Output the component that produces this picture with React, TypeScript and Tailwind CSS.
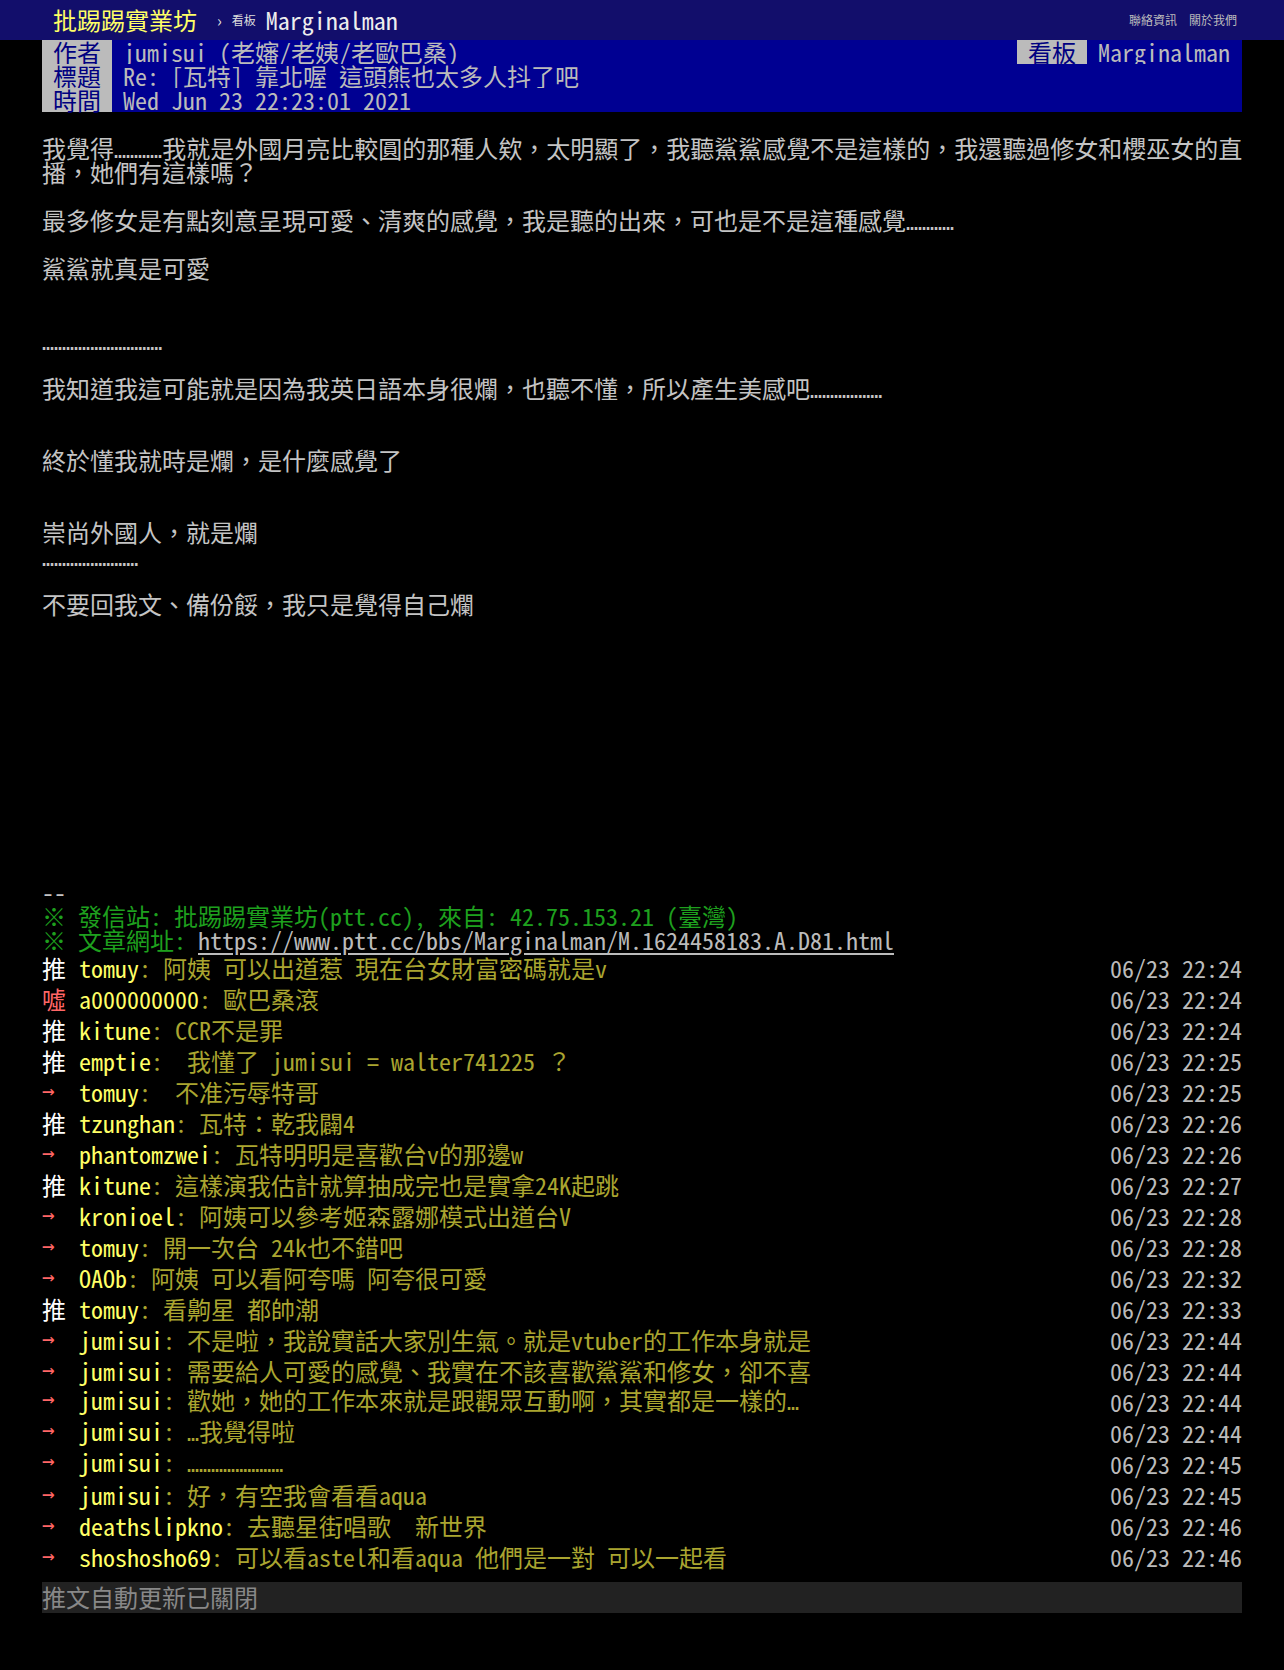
import type { ReactNode } from "react";

type Push = { tag: string; user: string; text: string; time: string };

const pushes: Push[] = [
  { tag: "推", user: "tomuy", text: ": 阿姨 可以出道惹 現在台女財富密碼就是v", time: "06/23 22:24" },
  { tag: "噓", user: "a000000000", text: ": 歐巴桑滾", time: "06/23 22:24" },
  { tag: "推", user: "kitune", text: ": CCR不是罪", time: "06/23 22:24" },
  { tag: "推", user: "emptie", text: ":  我懂了 jumisui = walter741225 ？", time: "06/23 22:25" },
  { tag: "→", user: "tomuy", text: ":  不准污辱特哥", time: "06/23 22:25" },
  { tag: "推", user: "tzunghan", text: ": 瓦特：乾我闢4", time: "06/23 22:26" },
  { tag: "→", user: "phantomzwei", text: ": 瓦特明明是喜歡台v的那邊w", time: "06/23 22:26" },
  { tag: "推", user: "kitune", text: ": 這樣演我估計就算抽成完也是實拿24K起跳", time: "06/23 22:27" },
  { tag: "→", user: "kronioel", text: ": 阿姨可以參考姬森露娜模式出道台V", time: "06/23 22:28" },
  { tag: "→", user: "tomuy", text: ": 開一次台 24k也不錯吧", time: "06/23 22:28" },
  { tag: "→", user: "OAOb", text: ": 阿姨 可以看阿夸嗎 阿夸很可愛", time: "06/23 22:32" },
  { tag: "推", user: "tomuy", text: ": 看齁星 都帥潮", time: "06/23 22:33" },
  { tag: "→", user: "jumisui", text: ": 不是啦，我說實話大家別生氣。就是vtuber的工作本身就是", time: "06/23 22:44" },
  { tag: "→", user: "jumisui", text: ": 需要給人可愛的感覺、我實在不該喜歡鯊鯊和修女，卻不喜", time: "06/23 22:44" },
  { tag: "→", user: "jumisui", text: ": 歡她，她的工作本來就是跟觀眾互動啊，其實都是一樣的…", time: "06/23 22:44" },
  { tag: "→", user: "jumisui", text: ": …我覺得啦", time: "06/23 22:44" },
  { tag: "→", user: "jumisui", text: ": ……………………", time: "06/23 22:45" },
  { tag: "→", user: "jumisui", text: ": 好，有空我會看看aqua", time: "06/23 22:45" },
  { tag: "→", user: "deathslipkno", text: ": 去聽星街唱歌  新世界", time: "06/23 22:46" },
  { tag: "→", user: "shoshosho69", text: ": 可以看astel和看aqua 他們是一對 可以一起看", time: "06/23 22:46" },
];

const body: string[] = [
  "",
  "我覺得…………我就是外國月亮比較圓的那種人欸，太明顯了，我聽鯊鯊感覺不是這樣的，我還聽過修女和櫻巫女的直",
  "播，她們有這樣嗎？",
  "",
  "最多修女是有點刻意呈現可愛、清爽的感覺，我是聽的出來，可也是不是這種感覺…………",
  "",
  "鯊鯊就真是可愛",
  "",
  "",
  "…………………………",
  "",
  "我知道我這可能就是因為我英日語本身很爛，也聽不懂，所以產生美感吧………………",
  "",
  "",
  "終於懂我就時是爛，是什麼感覺了",
  "",
  "",
  "崇尚外國人，就是爛",
  "……………………",
  "",
  "不要回我文、備份餒，我只是覺得自己爛",
  "",
  "",
  "",
  "",
  "",
  "",
  "",
  "",
  "",
  "",
  "",
  "--",
];

// "…" is half width in the original terminal font
function Dots({ text }: { text: string }) {
  const parts = text.split(/(…+)/);
  return (
    <>
      {parts.map((p, i) =>
        p.startsWith("…") ? (
          <span key={i} className="font-['DejaVu_Sans_Mono',monospace] text-[20px]">
            {p}
          </span>
        ) : (
          <span key={i}>{p}</span>
        )
      )}
    </>
  );
}

function Meta({ tag, children, right }: { tag: string; children: ReactNode; right?: ReactNode }) {
  return (
    <div className="flex h-[24px] leading-[24px]">
      <div className="w-[70px] bg-[#bbbbbb] text-center text-[#000080]">{tag}</div>
      <div className="flex flex-1 items-start justify-between bg-[#000092] pl-[11px] pr-[12px] text-[#bbbbbb]">
        <span className="whitespace-pre">{children}</span>
        {right}
      </div>
    </div>
  );
}

export default function App() {
  return (
    <div className="min-h-[1670px] bg-black font-['Noto_Sans_Mono_CJK_TC','Noto_Sans_CJK_TC',monospace] text-[24px] text-[#c4c4c4]">
      <div className="flex h-[40px] items-center justify-between bg-[#120e6b] pl-[53px] pr-[47px]">
        <div className="flex items-center">
          <span className="text-[24px] leading-none text-[#ffff66]">批踢踢實業坊</span>
          <span className="ml-[20px] text-[16px] text-[#dddddd]">›</span>
          <span className="ml-[10px] text-[12px] text-[#dddddd]">看板</span>
          <span className="ml-[10px] leading-none text-[#eeeeee]">Marginalman</span>
        </div>
        <div className="flex gap-[12px] text-[12px] text-[#bbbbbb]">
          <span>聯絡資訊</span>
          <span>關於我們</span>
        </div>
      </div>

      <div className="ml-[42px] w-[1200px]">
        <Meta
          tag="作者"
          right={
            <div className="flex">
              <span className="w-[70px] bg-[#bbbbbb] text-center text-[#000080]">看板</span>
              <span className="ml-[11px]">Marginalman</span>
            </div>
          }
        >
          jumisui (老嬸/老姨/老歐巴桑)
        </Meta>
        <Meta tag="標題">Re: [瓦特] 靠北喔 這頭熊也太多人抖了吧</Meta>
        <Meta tag="時間">Wed Jun 23 22:23:01 2021</Meta>

        {body.map((line, i) => (
          <div key={i} className="h-[24px] whitespace-pre leading-[23px]">
            <Dots text={line} />
          </div>
        ))}
        <div className="h-[24px] whitespace-pre leading-[23px] text-[#1ea01e]">
          ※ 發信站: 批踢踢實業坊(ptt.cc), 來自: 42.75.153.21 (臺灣)
        </div>
        <div className="h-[24px] whitespace-pre leading-[23px] text-[#1ea01e]">
          ※ 文章網址: <span className="text-[#bbbbbb] underline underline-offset-[3px]">https://www.ptt.cc/bbs/Marginalman/M.1624458183.A.D81.html</span>
        </div>

        {pushes.map((p, i) => (
          <div key={i} className="flex h-[31px] items-center justify-between whitespace-pre leading-[29px]">
            <div className="flex">
              {p.tag === "→" ? (
                <span className="inline-block w-[37px] font-['DejaVu_Sans_Mono',monospace] text-[21px] text-[#ff6666]">→</span>
              ) : (
                <span className={`inline-block w-[37px] ${p.tag === "推" ? "text-white" : "text-[#ff6666]"}`}>{p.tag}</span>
              )}
              <span className="text-[#ffff66]">{p.user}</span>
              <span className="text-[#aaa530]">
                <Dots text={p.text} />
              </span>
            </div>
            <span className="text-[#bbbbbb]">{p.time}</span>
          </div>
        ))}

        <div className="mt-[10px] h-[31px] bg-[#222222] leading-[29px] text-[#888888]">推文自動更新已關閉</div>
      </div>
    </div>
  );
}
